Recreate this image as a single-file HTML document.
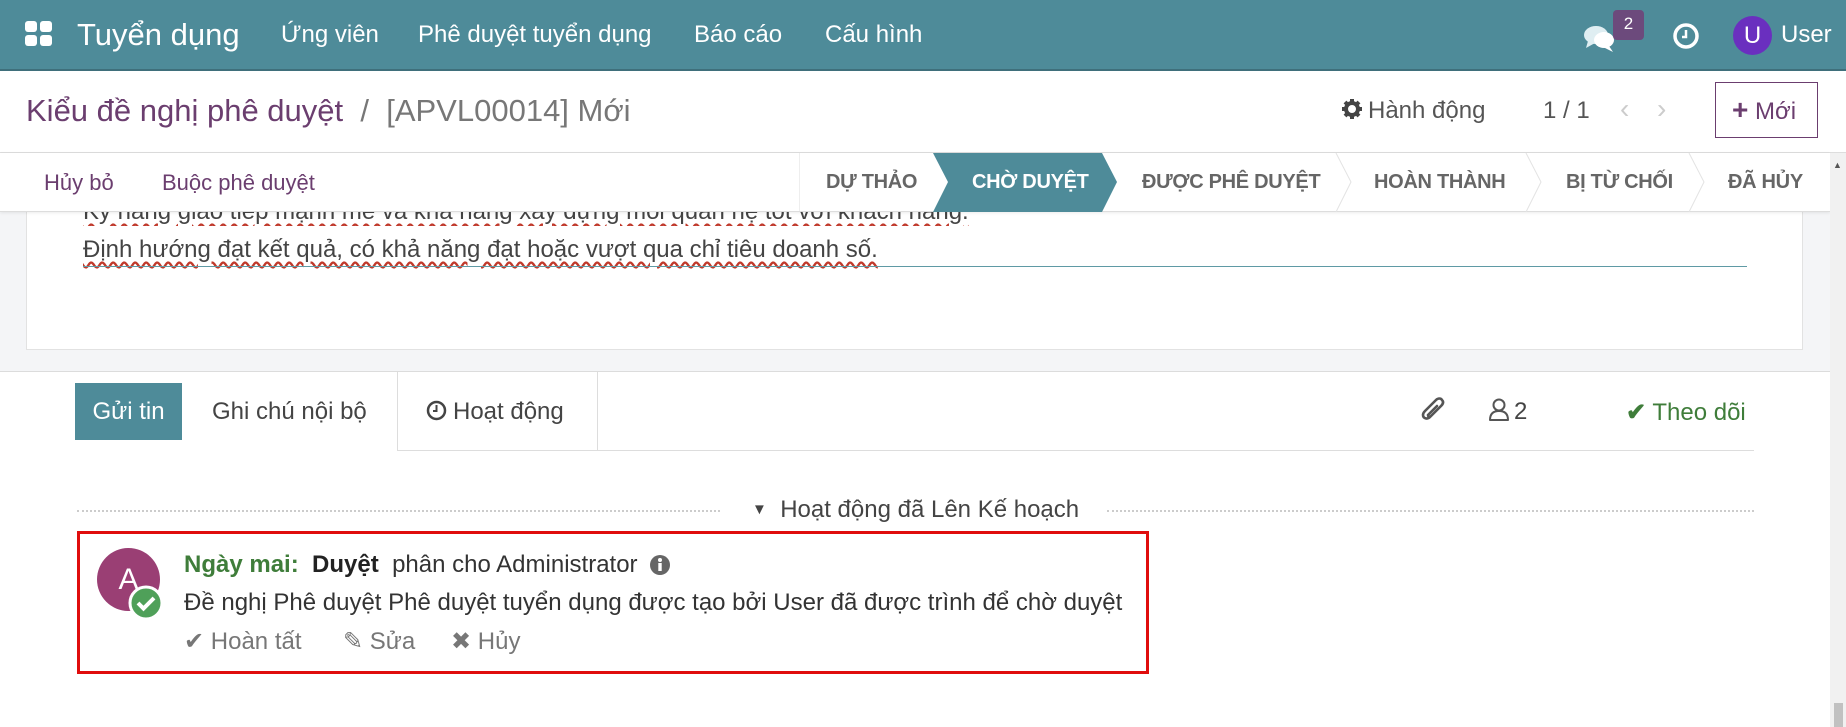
<!DOCTYPE html>
<html><head><meta charset="utf-8">
<style>
*{box-sizing:border-box;margin:0;padding:0}
body{width:1846px;height:727px;overflow:hidden;background:#fff;font-family:"Liberation Sans","Noto Sans CJK SC",sans-serif;color:#4c4c4c;position:relative}
.abs{position:absolute;white-space:nowrap}
.nav{position:absolute;left:0;top:0;width:1846px;height:71px;background:#4e8b99;border-bottom:2px solid #3f6f7b}
.nav .abs{color:#fff;font-size:24px;top:21px}
.bc{position:absolute;left:0;top:71px;width:1846px;height:82px;background:#fff;border-bottom:1px solid #ddd}
.sb{position:absolute;left:0;top:153px;width:1830px;height:59px;background:#fff;border-bottom:1px solid #ddd;box-shadow:0 1px 3px rgba(0,0,0,.08)}
.gray{position:absolute;left:0;top:212px;width:1830px;height:160px;background:#f4f5f7;border-bottom:1px solid #dcdcdc}
.card{position:absolute;left:26px;top:200px;width:1777px;height:150px;background:#fff;border:1px solid #e2e2e2;border-top:none}
.st{font-size:20px;font-weight:bold;color:#666;letter-spacing:-0.3px}
.wavy{text-decoration:underline wavy #c0392b;text-underline-offset:4px}
</style></head><body>
<div class="nav">
  <svg class="abs" style="left:25px;top:21px" width="28" height="26" viewBox="0 0 28 26"><rect x="0" y="0" width="12" height="11" rx="3" fill="#fff"/><rect x="15" y="0" width="12" height="11" rx="3" fill="#fff"/><rect x="0" y="14" width="12" height="11" rx="3" fill="#fff"/><rect x="15" y="14" width="12" height="11" rx="3" fill="#fff"/></svg>
  <div class="abs" style="left:77px;top:17px;font-size:31px">Tuyển dụng</div>
  <div class="abs" style="left:281px">Ứng viên</div>
  <div class="abs" style="left:418px">Phê duyệt tuyển dụng</div>
  <div class="abs" style="left:694px">Báo cáo</div>
  <div class="abs" style="left:825px">Cấu hình</div>
  <svg class="abs" style="left:1583px;top:24px" width="34" height="28" viewBox="0 0 34 28"><ellipse cx="13" cy="11" rx="12" ry="9" fill="#dfeef2"/><path d="M5 17 L3 24 L12 19Z" fill="#dfeef2"/><ellipse cx="21" cy="16" rx="10" ry="8" fill="#fff"/><path d="M26 22 L30 28 L20 23Z" fill="#fff"/></svg>
  <div class="abs" style="left:1613px;top:10px;width:31px;height:30px;background:#6c4a7c;border-radius:4px;font-size:17px;text-align:center;line-height:28px">2</div>
  <svg class="abs" style="left:1672px;top:22px" width="28" height="28" viewBox="0 0 28 28"><circle cx="14" cy="14" r="11" fill="none" stroke="#fff" stroke-width="3.5"/><path d="M14 8 V15 H10" fill="none" stroke="#fff" stroke-width="2.5"/></svg>
  <div class="abs" style="left:1733px;width:39px;height:39px;border-radius:50%;background:#6a2fbf;text-align:center;line-height:39px;font-size:24px;top:16px">U</div>
  <div class="abs" style="left:1781px">User</div>
</div>
<div class="bc">
  <div class="abs" style="left:26px;top:22px;font-size:31px;color:#6b3e6f">Kiểu đề nghị phê duyệt <span style="color:#777">&nbsp;/&nbsp; [APVL00014] Mới</span></div>
  <svg class="abs" style="left:1342px;top:28px" width="20" height="20" viewBox="0 0 20 20"><circle cx="10" cy="10" r="6" fill="none" stroke="#444" stroke-width="4"/><g stroke="#444" stroke-width="4"><path d="M10 0V4M10 16V20M0 10H4M16 10H20M3 3L5.5 5.5M14.5 14.5L17 17M3 17L5.5 14.5M14.5 5.5L17 3"/></g></svg>
  <div class="abs" style="left:1368px;top:26px;font-size:24px;color:#555">Hành động</div>
  <div class="abs" style="left:1543px;top:26px;font-size:24px;color:#555">1 / 1</div>
  <div class="abs" style="left:1620px;top:22px;font-size:28px;color:#ccc">&#8249;</div>
  <div class="abs" style="left:1657px;top:22px;font-size:28px;color:#ccc">&#8250;</div>
  <div class="abs" style="left:1715px;top:11px;width:103px;height:56px;border:1px solid #6b3e6f;font-size:24px;color:#6b3e6f;line-height:54px;padding-left:16px"><b style="font-size:28px">+</b> Mới</div>
</div>
<div class="gray"></div>
<div class="card">
  <div class="abs wavy" style="left:56px;top:-2px;font-size:24px;color:#444;clip-path:inset(14px 0 0 0)">Kỹ năng giao tiếp mạnh mẽ và khả năng xây dựng mối quan hệ tốt với khách hàng.</div>
  <div class="abs wavy" style="left:56px;top:36px;font-size:24px;color:#444">Định hướng đạt kết quả, có khả năng đạt hoặc vượt qua chỉ tiêu doanh số.</div>
  <div class="abs" style="left:56px;top:66px;width:1664px;height:1px;background:#5f9aa5"></div>
</div>
<div class="sb">
  <div class="abs" style="left:44px;top:17px;font-size:22px;color:#6b3e6f">Hủy bỏ</div>
  <div class="abs" style="left:162px;top:17px;font-size:22px;color:#6b3e6f">Buộc phê duyệt</div>
  <svg class="abs" style="left:799px;top:0" width="1031" height="59" viewBox="0 0 1031 59">
    <line x1="0" y1="0" x2="0" y2="59" stroke="#ddd"/>
    <path d="M134 0 H303 L318 29 L303 59 H134 L149 29Z" fill="#4e8b99"/>
    <path d="M537 0 L552 29 L537 59" fill="none" stroke="#e3e3e3"/>
    <path d="M727 0 L742 29 L727 59" fill="none" stroke="#e3e3e3"/>
    <path d="M890 0 L905 29 L890 59" fill="none" stroke="#e3e3e3"/>
  </svg>
  <div class="abs st" style="left:826px;top:18px">DỰ THẢO</div>
  <div class="abs st" style="left:972px;top:18px;color:#fff">CHỜ DUYỆT</div>
  <div class="abs st" style="left:1142px;top:18px">ĐƯỢC PHÊ DUYỆT</div>
  <div class="abs st" style="left:1374px;top:18px">HOÀN THÀNH</div>
  <div class="abs st" style="left:1566px;top:18px">BỊ TỪ CHỐI</div>
  <div class="abs st" style="left:1728px;top:18px">ĐÃ HỦY</div>
</div>
<div class="abs" style="left:1830px;top:153px;width:16px;height:574px;background:#f1f1f1"></div>
<div class="abs" style="left:1833px;top:160px;font-size:9px;color:#555">▲</div>
<div class="abs" style="left:1834px;top:703px;width:9px;height:24px;background:#c1c1c1"></div>

<div class="abs" style="left:75px;top:383px;width:107px;height:57px;background:#4e8b99;color:#fff;font-size:24px;line-height:57px;text-align:center">Gửi tin</div>
<div class="abs" style="left:212px;top:398px;font-size:24px;color:#444">Ghi chú nội bộ</div>
<div class="abs" style="left:397px;top:372px;width:201px;height:79px;border-left:1px solid #ddd;border-right:1px solid #ddd"></div>
<svg class="abs" style="left:426px;top:400px" width="21" height="21" viewBox="0 0 21 21"><circle cx="10.5" cy="10.5" r="8.5" fill="none" stroke="#444" stroke-width="2.5"/><path d="M10.5 5V11H7" fill="none" stroke="#444" stroke-width="2"/></svg>
<div class="abs" style="left:453px;top:398px;font-size:24px;color:#444">Hoạt động</div>
<div class="abs" style="left:397px;top:450px;width:1357px;height:1px;background:#ddd"></div>
<svg class="abs" style="left:1420px;top:393px" width="28" height="30" viewBox="0 0 28 30"><path d="M20 14 L10 24 C7 27 3 25 3 22 C3 20 4 19 5 18 L16 7 C18 5 21 5 22 7 C24 9 23 11 21 13 L11 23 C10 24 8 24 8 22 L17 13" fill="none" stroke="#555" stroke-width="2.6" stroke-linecap="round"/></svg>
<svg class="abs" style="left:1488px;top:398px" width="22" height="24" viewBox="0 0 22 24"><circle cx="11" cy="7" r="5.5" fill="none" stroke="#555" stroke-width="2"/><path d="M2 22 C2 15 6 13 11 13 C16 13 20 15 20 22 Z" fill="none" stroke="#555" stroke-width="2" stroke-linejoin="round"/></svg>
<div class="abs" style="left:1514px;top:398px;font-size:24px;color:#444">2</div>
<div class="abs" style="left:1626px;top:398px;font-size:24px;color:#3f7d3a"><b>✔</b> Theo dõi</div>

<div class="abs" style="left:77px;top:510px;width:643px;border-top:2px dotted #ccc"></div>
<div class="abs" style="left:1107px;top:510px;width:647px;border-top:2px dotted #ccc"></div>
<div class="abs" style="left:752px;top:496px;font-size:24px;color:#444"><span style="font-size:15px;position:relative;top:-3px">▼</span>&nbsp; Hoạt động đã Lên Kế hoạch</div>

<div class="abs" style="left:77px;top:531px;width:1072px;height:143px;border:3px solid #e00d0d"></div>
<div class="abs" style="left:97px;top:548px;width:63px;height:63px;border-radius:50%;background:#9a3f74;color:#fff;font-size:30px;text-align:center;line-height:63px">A</div>
<svg class="abs" style="left:128px;top:585px" width="36" height="36" viewBox="0 0 36 36"><circle cx="18" cy="18" r="16" fill="#4fa059" stroke="#fff" stroke-width="3"/><path d="M10 18 L15.5 23.5 L26 13" fill="none" stroke="#fff" stroke-width="4"/></svg>
<div class="abs" style="left:184px;top:551px;font-size:24px;color:#333"><b style="color:#3f7d3a">Ngày mai:</b>&nbsp; <b style="color:#222">Duyệt</b>&nbsp; phân cho Administrator</div>
<svg class="abs" style="left:649px;top:554px" width="22" height="22" viewBox="0 0 22 22"><circle cx="11" cy="11" r="10" fill="#666"/><rect x="9.3" y="9" width="3.4" height="8" fill="#fff"/><circle cx="11" cy="6" r="2" fill="#fff"/></svg>
<div class="abs" style="left:184px;top:589px;font-size:24px;color:#333">Đề nghị Phê duyệt Phê duyệt tuyển dụng được tạo bởi User đã được trình để chờ duyệt</div>
<div class="abs" style="left:184px;top:627px;font-size:24px;color:#777">✔ Hoàn tất</div>
<div class="abs" style="left:343px;top:627px;font-size:24px;color:#777">✎ Sửa</div>
<div class="abs" style="left:451px;top:627px;font-size:24px;color:#777">✖ Hủy</div>
</body></html>
